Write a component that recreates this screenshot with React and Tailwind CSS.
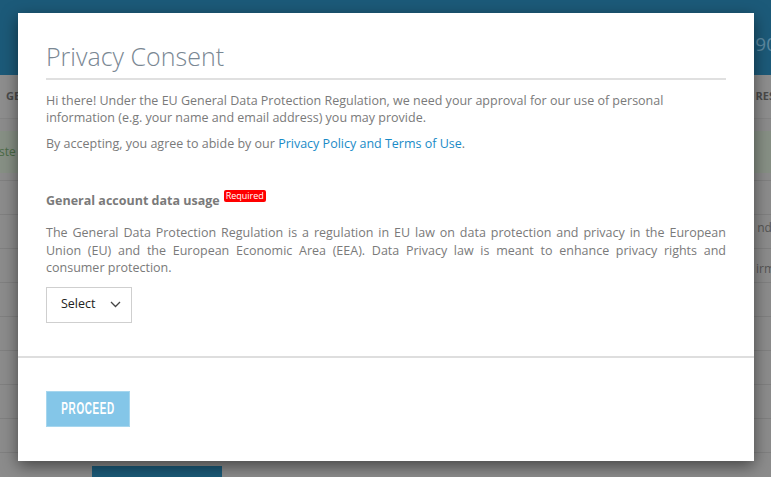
import React from "react";

const rows = [0, 1, 2, 3, 4, 5, 6, 7];

export default function App() {
  return (
    <div
      className="relative w-[771px] h-[477px] overflow-hidden bg-[#8c8c8c]"
      style={{ fontFamily: '"Open Sans", "Liberation Sans", sans-serif' }}
    >
      {/* dimmed page behind */}
      <div className="flex flex-col w-full h-full">
        <div className="h-[75px] bg-[#1c5a79] flex items-start justify-end pt-[35px]">
          <span className="text-[19px] text-[#5e8aa2] mr-[-6px] leading-none">90</span>
        </div>
        <div className="h-[44px] bg-[#8e8e8e] flex items-center justify-between border-b border-[#858585]">
          <span className="text-[11px] font-bold text-[#4a4a4a] ml-[6px]">GE</span>
          <span className="text-[11px] font-bold text-[#4a4a4a] mr-[-4px]">RES</span>
        </div>
        <div className="h-[12px] bg-[#8c8c8c]" />
        <div className="h-[42px] bg-[#879085] flex items-center">
          <span className="text-[12px] text-[#4b6b47] ml-[-4px]">iste</span>
        </div>
        <div className="h-[8px] border-b border-[#808080]" />
        <div className="flex flex-col">
          {rows.map((i) => (
            <div key={i} className="h-[34px] border-b border-[#808080]" />
          ))}
        </div>
        <div className="absolute right-[-4px] top-[219px] text-[12px] text-[#555]">nd.</div>
        <div className="absolute right-[-4px] top-[260px] text-[12px] text-[#555]">irm</div>
        <div className="absolute left-[92px] top-[466px] w-[130px] h-[20px] bg-[#1b5a78]" />
      </div>

      {/* modal */}
      <div className="absolute left-[18px] top-[13px] w-[736px] h-[448px] bg-white shadow-[0_5px_15px_rgba(0,0,0,0.5)] flex flex-col">
        <div className="px-[28px] pt-[26px]">
          <h2 className="text-[25px] font-light text-[#7a8793] leading-[34px] pb-[5px] border-b-2 border-[#e0e0e0]">
            Privacy Consent
          </h2>
          <p className="text-[12.5px] text-[#7a7a7a] leading-[17px] mt-[12px]">
            Hi there! Under the EU General Data Protection Regulation, we need your approval for our use of personal
            <br />
            information (e.g. your name and email address) you may provide.
          </p>
          <p className="text-[12.5px] text-[#7a7a7a] leading-[17px] mt-[9px]">
            By accepting, you agree to abide by our{" "}
            <span className="text-[#1a8bc7]">Privacy Policy and Terms of Use</span>.
          </p>
          <div className="mt-[39px] flex items-start">
            <span className="text-[12.5px] font-bold text-[#7a7a7a] leading-[17px] mt-[1px]">
              General account data usage
            </span>
            <span className="ml-[4px] mt-[-1px] bg-[#f00] text-white text-[9px] leading-[12px] px-[2px] rounded-[2px]">
              Required
            </span>
          </div>
          <p className="text-[12.5px] text-[#7a7a7a] leading-[17.5px] mt-[15px] text-justify">
            The General Data Protection Regulation is a regulation in EU law on data protection and privacy in the European
            Union (EU) and the European Economic Area (EEA). Data Privacy law is meant to enhance privacy rights and
            consumer protection.
          </p>
          <div className="mt-[10px] w-[86px] h-[36px] border border-[#cfcfcf] flex items-center justify-between pl-[14px] pr-[10px]">
            <span className="text-[12.5px] text-[#222]">Select</span>
            <svg width="11" height="7" viewBox="0 0 11 7" fill="none">
              <path d="M1 1l4.5 4.5L10 1" stroke="#444" strokeWidth="1.3" />
            </svg>
          </div>
        </div>
        <div className="mt-[33px] border-t-2 border-[#dedede]" />
        <div className="px-[28px] pt-[33px]">
          <button className="w-[84px] h-[36px] bg-[#84c6e8] border border-[#a6d6ee] text-white flex items-center justify-center">
            <span
              className="inline-block text-[16px] font-bold tracking-[1px] scale-x-[0.62] leading-none"
              style={{ fontFamily: '"Liberation Sans", Arial, sans-serif' }}
            >
              PROCEED
            </span>
          </button>
        </div>
      </div>
    </div>
  );
}
